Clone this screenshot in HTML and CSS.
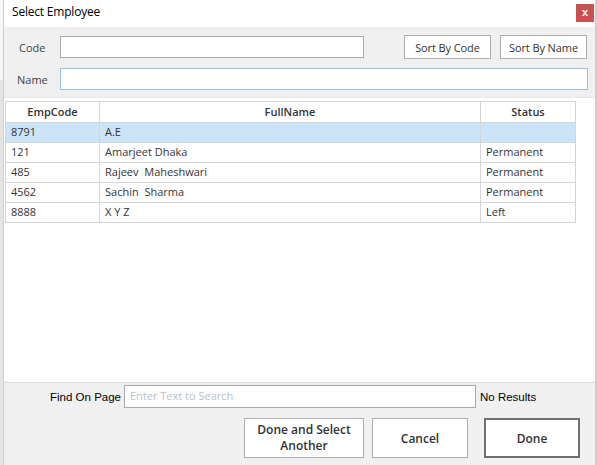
FILE: index.html
```html
<!DOCTYPE html>
<html>
<head>
<meta charset="utf-8">
<link rel="stylesheet" href="styles.css">
</head>
<body>
<div class="page">
  <div class="behind"></div>
  <div class="dialog">
    <div class="titlebar">
      <span class="title">Select Employee</span>
      <span class="close">x</span>
    </div>
    <div class="form">
      <div class="row row-code">
        <label class="lbl lbl-code">Code</label>
        <div class="input input-code"></div>
        <div class="sort-btns">
          <button class="btn-sort">Sort By Code</button>
          <button class="btn-sort">Sort By Name</button>
        </div>
      </div>
      <div class="row row-name">
        <label class="lbl lbl-name">Name</label>
        <div class="input input-name"></div>
      </div>
    </div>
    <div class="grid-area">
      <div class="grid">
        <div class="hd">EmpCode</div><div class="hd">FullName</div><div class="hd">Status</div>
        <div class="c sel">8791</div><div class="c sel">A.E</div><div class="c sel"></div>
        <div class="c">121</div><div class="c">Amarjeet Dhaka</div><div class="c">Permanent</div>
        <div class="c">485</div><div class="c">Rajeev&nbsp; Maheshwari</div><div class="c">Permanent</div>
        <div class="c">4562</div><div class="c">Sachin&nbsp; Sharma</div><div class="c">Permanent</div>
        <div class="c">8888</div><div class="c">X Y Z</div><div class="c">Left</div>
      </div>
    </div>
    <div class="bottom">
      <div class="find-row">
        <span class="find-lbl">Find On Page</span>
        <div class="find-input">Enter Text to Search</div>
        <span class="no-res">No Results</span>
      </div>
      <div class="btn-row">
        <button class="btn btn-two"><span class="ln">Done and Select</span><span class="ln">Another</span></button>
        <button class="btn btn-cancel">Cancel</button>
        <button class="btn btn-default">Done</button>
      </div>
    </div>
  </div>
  <div class="edge"></div>
</div>
</body>
</html>
```
FILE: styles.css
```css
html, body {
  margin: 0;
  padding: 0;
}
body {
  width: 597px;
  height: 465px;
  overflow: hidden;
  background: #f0f0f0;
  font-family: "Open Sans", "Noto Sans", sans-serif;
}
.page {
  display: flex;
  height: 465px;
}
.behind {
  width: 3px;
  background: linear-gradient(to bottom, #f7f7f7 0, #f7f7f7 80px, #e4e4e4 80px, #e4e4e4 100%);
  border-right: 1px solid #d0d0d0;
}
.dialog {
  width: 591px;
  display: flex;
  flex-direction: column;
  background: #f0f0f0;
}
.edge {
  width: 2px;
  background: #cdcdcd;
}
.titlebar {
  height: 27px;
  background: #fff;
  display: flex;
  align-items: flex-start;
  justify-content: space-between;
  box-sizing: border-box;
}
.title {
  font-size: 12px;
  color: #000;
  padding: 3px 0 0 8px;
  letter-spacing: -0.2px;
}
.close {
  width: 18px;
  height: 18px;
  margin: 4px 1px 0 0;
  background: #c75050;
  color: #fff;
  font-family: "Liberation Sans", sans-serif;
  font-size: 11px;
  font-weight: bold;
  line-height: 16px;
  text-align: center;
}
.form {
  padding: 8px 0 0 0;
  height: 70px;
  box-sizing: border-box;
}
.row {
  display: flex;
  align-items: center;
}
.row-name {
  margin-top: 9px;
}
.lbl {
  font-size: 11px;
  color: #404040;
  width: 56px;
  box-sizing: border-box;
}
.lbl-code { padding-left: 15px; }
.lbl-name { padding-left: 13px; }
.input {
  height: 22px;
  box-sizing: border-box;
  background: #fff;
  border: 1px solid #a9a9a9;
}
.input-code { width: 304px; }
.input-name {
  width: 528px;
  border-color: #99c2e4;
}
.sort-btns {
  display: flex;
  gap: 9px;
  margin-left: 40px;
}
.btn-sort {
  width: 87px;
  height: 24px;
  padding: 0;
  background: #fff;
  border: 1px solid #adadad;
  font-family: "Open Sans", "Noto Sans", sans-serif;
  font-size: 11px;
  color: #333;
  letter-spacing: -0.1px;
}
.grid-area {
  height: 286px;
  background: #fff;
  padding: 3px 0 0 1px;
  box-sizing: border-box;
  border-top: 1px solid #e6e6e6;
  border-bottom: 1px solid #d9d9d9;
}
.grid {
  display: grid;
  grid-template-columns: 94px 381px 95px;
  grid-template-rows: 22px;
  grid-auto-rows: 20px;
  width: 571px;
  border-left: 1px solid #d5d5d5;
}
.grid > div {
  box-sizing: border-box;
  border-right: 1px solid #d5d5d5;
  border-bottom: 1px solid #d5d5d5;
  font-size: 11px;
  color: #333;
  line-height: 18px;
  white-space: nowrap;
  overflow: hidden;
}
.grid > .hd {
  height: 22px;
  font-weight: 600;
  text-align: center;
  line-height: 20px;
  border-top: 1px solid #d5d5d5;
}
.c {
  padding-left: 5px;
}
.sel {
  background: #cce4f7;
}
.bottom {
  flex: 1;
  background: #f0f0f0;
}
.find-row {
  display: flex;
  align-items: center;
  margin-top: 2px;
  height: 23px;
}
.find-lbl {
  width: 120px;
  text-align: right;
  padding-right: 3px;
  box-sizing: border-box;
  font-family: "Liberation Sans", sans-serif;
  font-size: 11.5px;
  color: #000;
}
.find-input {
  width: 352px;
  height: 23px;
  box-sizing: border-box;
  background: #fff;
  border: 1px solid #a9a9a9;
  font-size: 11px;
  color: #b7c1cf;
  padding-left: 5px;
  line-height: 20px;
}
.no-res {
  margin-left: 4px;
  font-family: "Liberation Sans", sans-serif;
  font-size: 11.5px;
  color: #000;
}
.btn-row {
  display: flex;
  margin-top: 10px;
  padding-left: 240px;
}
.btn {
  height: 40px;
  padding: 0;
  background: #fff;
  border: 1px solid #adadad;
  font-family: "Open Sans", "Noto Sans", sans-serif;
  font-weight: 600;
  font-size: 12px;
  color: #333;
}
.btn-two {
  width: 120px;
  margin-right: 8px;
  display: flex;
  flex-direction: column;
  align-items: center;
  justify-content: center;
}
.ln {
  display: block;
  line-height: 16px;
}
.btn-cancel { width: 96px; margin-right: 16px; }
.btn-default {
  width: 96px;
  border: 2px solid #707070;
}
```
